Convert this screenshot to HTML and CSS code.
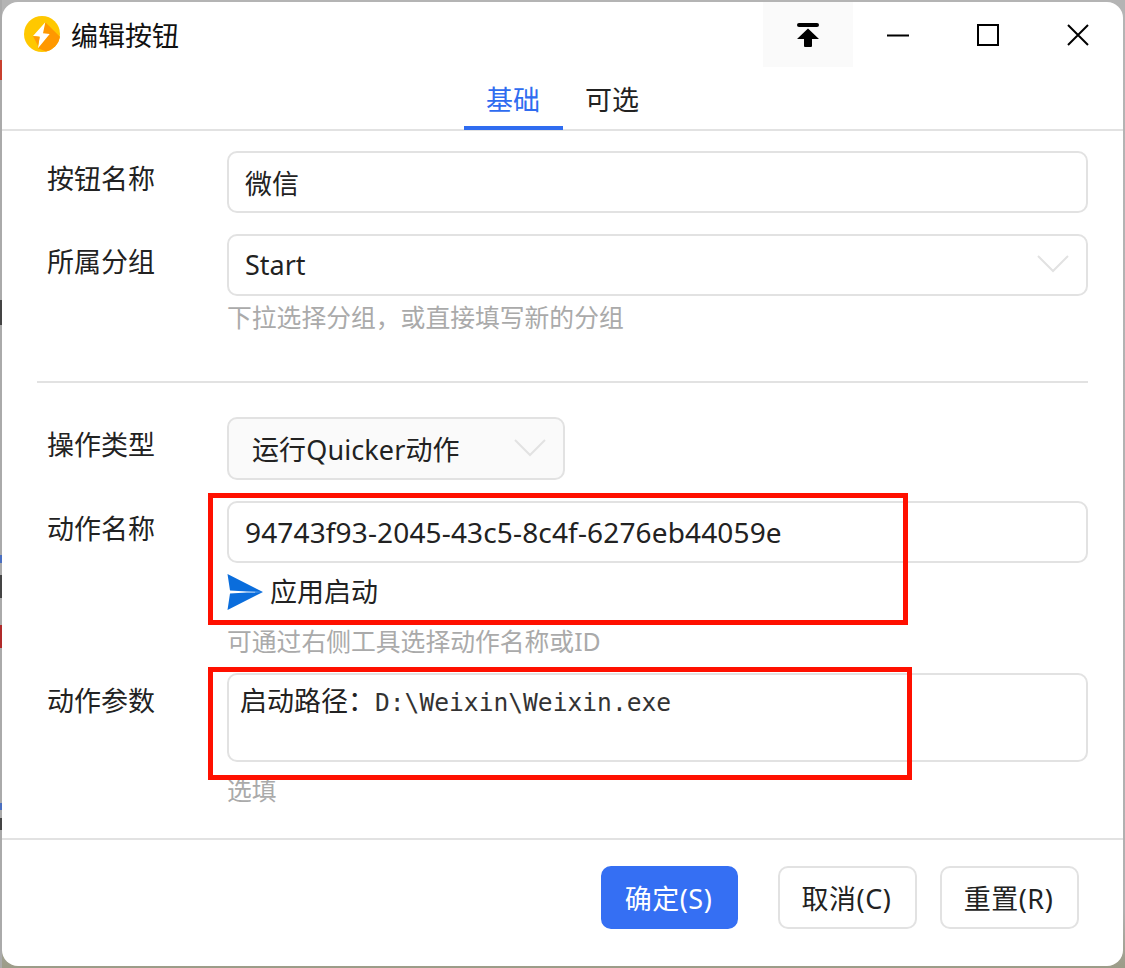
FILE: index.html
```html
<!DOCTYPE html>
<html lang="zh">
<head>
<meta charset="utf-8">
<title>编辑按钮</title>
<link rel="stylesheet" href="styles.css">
</head>
<body>
<div class="window">
  <header class="titlebar">
    <svg class="logo" viewBox="0 0 36 36" width="36" height="36">
      <circle cx="18" cy="18" r="18" fill="#ffc800"/>
      <path d="M21.3 6.3 L36 20.7 A18 18 0 0 1 22 35.5 L14 32.3 Z" fill="#ff9800"/>
      <path d="M21.3 6.3 L9 20 L15.7 20.7 L14 32.3 L25.7 18 L19 17.3 Z" fill="#fff"/>
      <path d="M9 20 L15.7 20.7 L14 30 Z" fill="#ff9a0a"/>
    </svg>
    <span class="title">编辑按钮</span>
    <div class="controls">
      <div class="ctl ctl-pin">
        <svg viewBox="0 0 24 26" width="24" height="26"><rect x="1" y="1" width="22" height="4" rx="2" fill="#000"/><path d="M12 6.5 L23 17 L16 17 L16 24 Q16 25 15 25 L9 25 Q8 25 8 24 L8 17 L1 17 Z" fill="#000"/></svg>
      </div>
      <div class="ctl ctl-min"><svg viewBox="0 0 24 24" width="24" height="24"><path d="M1 12.5 H23" stroke="#000" stroke-width="2" fill="none"/></svg></div>
      <div class="ctl ctl-max"><svg viewBox="0 0 24 24" width="24" height="24"><rect x="2" y="2" width="20" height="20" stroke="#000" stroke-width="2" fill="none"/></svg></div>
      <div class="ctl ctl-close"><svg viewBox="0 0 24 24" width="24" height="24"><path d="M2 2 L22 22 M22 2 L2 22" stroke="#000" stroke-width="2" fill="none"/></svg></div>
    </div>
  </header>
  <nav class="tabs">
    <span class="tab tab-active">基础</span>
    <span class="tab">可选</span>
  </nav>
  <main class="form">
    <div class="row row-name">
      <label class="label">按钮名称</label>
      <div class="field"><div class="input input-cjk">微信</div></div>
    </div>
    <div class="row row-group">
      <label class="label">所属分组</label>
      <div class="field">
        <div class="input input-select">Start
          <svg class="chev chev-group" viewBox="0 0 32 18" width="32" height="18"><path d="M1 1 L16 16 L31 1" stroke="#e2e2e2" stroke-width="2" fill="none"/></svg>
        </div>
        <div class="hint">下拉选择分组，或直接填写新的分组</div>
      </div>
    </div>
    <hr class="sep">
    <div class="row row-type">
      <label class="label">操作类型</label>
      <div class="field"><div class="select">运行Quicker动作
        <svg class="chev chev-type" viewBox="0 0 32 18" width="32" height="18"><path d="M1 1 L16 16 L31 1" stroke="#e2e2e2" stroke-width="2" fill="none"/></svg>
      </div></div>
    </div>
    <div class="row row-action">
      <label class="label">动作名称</label>
      <div class="field">
        <div class="input input-id">94743f93-2045-43c5-8c4f-6276eb44059e</div>
        <div class="action-name">
          <svg viewBox="0 0 36 36" width="36" height="36"><path d="M0.5 0 L36 18 L20 17.6 L3 16.4 Z M36 18 L0.5 36 L3 19.6 L20 18.4 Z" fill="#0a6ddc"/></svg>
          <span>应用启动</span>
        </div>
        <div class="hint hint-action">可通过右侧工具选择动作名称或ID</div>
      </div>
    </div>
    <div class="row row-param">
      <label class="label">动作参数</label>
      <div class="field">
        <div class="textarea">启动路径：<span class="mono">D:\Weixin\Weixin.exe</span></div>
        <div class="hint hint-param">选填</div>
      </div>
    </div>
  </main>
  <footer class="footer">
    <button class="btn btn-primary">确定(S)</button>
    <button class="btn btn-cancel">取消(C)</button>
    <button class="btn btn-reset">重置(R)</button>
  </footer>
  <div class="mark mark-1"></div>
  <div class="mark mark-2"></div>
</div>
</body>
</html>
```
FILE: styles.css
```css
* { box-sizing: border-box; }
html, body { margin: 0; height: 100%; }
body {
  width: 1125px;
  height: 968px;
  overflow: hidden;
  padding: 2px;
  background:
    linear-gradient(#aaa 0 60px, #c8402f 60px 80px, #aaa 80px 300px, #444 300px 325px, #aaa 325px 555px, #4a6fc0 555px 563px, #aaa 563px 575px, #444 575px 598px, #aaa 598px 625px, #b02a2a 625px 648px, #aaa 648px 803px, #4a6fc0 803px 810px, #aaa 810px 818px, #444 818px 830px, #aaa 830px) 0 0 / 2px 100% no-repeat,
    linear-gradient(#b4b4b4, #b0b0b0 94%, #9c9c88);
  font-family: "Noto Sans", "Noto Sans CJK SC", sans-serif;
  font-size: 27px;
  color: #222;
}
.window {
  position: relative;
  width: 1121px;
  height: 964px;
  background: #fff;
  border-radius: 16px;
  display: flex;
  flex-direction: column;
  overflow: hidden;
}
.titlebar {
  height: 65px;
  display: flex;
  align-items: center;
  padding-left: 22px;
  flex: none;
}
.logo { margin-right: 11px; margin-top: -1px; }
.title { font-size: 27px; color: #111; line-height: 1; margin-top: 1px; }
.controls { margin-left: auto; display: flex; height: 65px; }
.ctl { width: 90px; height: 65px; display: flex; align-items: center; justify-content: center; }
.ctl-pin { background: #fafafa; }
.ctl-min svg, .ctl-max svg, .ctl-close svg { margin-top: 1px; }
.tabs {
  flex: none;
  height: 64px;
  display: flex;
  padding-left: 462px;
  border-bottom: 2px solid #e2e2e2;
}
.tab {
  width: 99px;
  height: 63px;
  line-height: 66px;
  text-align: center;
  font-size: 27px;
  color: #222;
  text-indent: -1px;
}
.tab-active {
  color: #2f6cf0;
  border-bottom: 4px solid #2f6cf0;
}
.form {
  flex: 1;
  padding: 20px 35px 0 45px;
  display: flex;
  flex-direction: column;
  min-height: 0;
}
.row { display: flex; align-items: flex-start; }
.label {
  width: 180px;
  flex: none;
  font-size: 27px;
  line-height: 56px;
  color: #222;
}
.field { flex: 1; min-width: 0; }
.input, .textarea, .select {
  border: 2px solid #e2e2e2;
  border-radius: 10px;
  background: #fff;
}
.input {
  height: 62px;
  line-height: 58px;
  padding-left: 16px;
  position: relative;
  color: #222;
}
.input-cjk { line-height: 61px; }
.input-id { font-size: 28px; letter-spacing: 0.15px; }
.row-group { margin-top: 21px; }
.hint {
  font-size: 24.8px;
  line-height: 34px;
  color: #aaa;
}
.row-group .hint { margin-top: 4px; }
.sep {
  border: 0;
  height: 2px;
  background: #e2e2e2;
  margin: 47px 0 34px -10px;
  flex: none;
}
.chev { position: absolute; right: 17px; }
.chev-group { top: 19px; }
.chev-type { top: 20px; }
.select {
  width: 338px;
  height: 63px;
  line-height: 62px;
  background: #fafafa;
  padding-left: 23px;
  position: relative;
  letter-spacing: 0.1px;
}
.row-action { margin-top: 21px; }
.action-name {
  height: 36px;
  margin-top: 11px;
  display: flex;
  align-items: center;
  gap: 7px;
  line-height: 36px;
}
.hint-action { margin-top: 14px; }
.row-param { margin-top: 15px; }
.textarea {
  height: 89px;
  padding: 8px 11px;
  line-height: 36px;
}
.mono {
  font-family: "DejaVu Sans Mono", monospace;
  font-size: 24.6px;
  color: #333;
}
.hint-param { margin-top: 11px; }
.footer {
  flex: none;
  height: 128px;
  border-top: 2px solid #e2e2e2;
  display: flex;
  align-items: flex-start;
  padding: 26px 0 0 599px;
}
.btn {
  height: 63px;
  border-radius: 10px;
  border: 2px solid #e2e2e2;
  background: #fff;
  font-family: inherit;
  font-size: 27px;
  letter-spacing: 0.5px;
  color: #222;
  padding: 0 2px 0 0;
}
.btn-primary { width: 137px; background: #356ff3; border-color: #356ff3; color: #fff; }
.btn-cancel { width: 139px; margin-left: 40px; }
.btn-reset { width: 139px; margin-left: 23px; }
.mark { position: absolute; border: 5px solid #ff1000; }
.mark-1 { left: 206px; top: 491px; width: 700px; height: 132px; }
.mark-2 { left: 206px; top: 665px; width: 704px; height: 113px; }
```
